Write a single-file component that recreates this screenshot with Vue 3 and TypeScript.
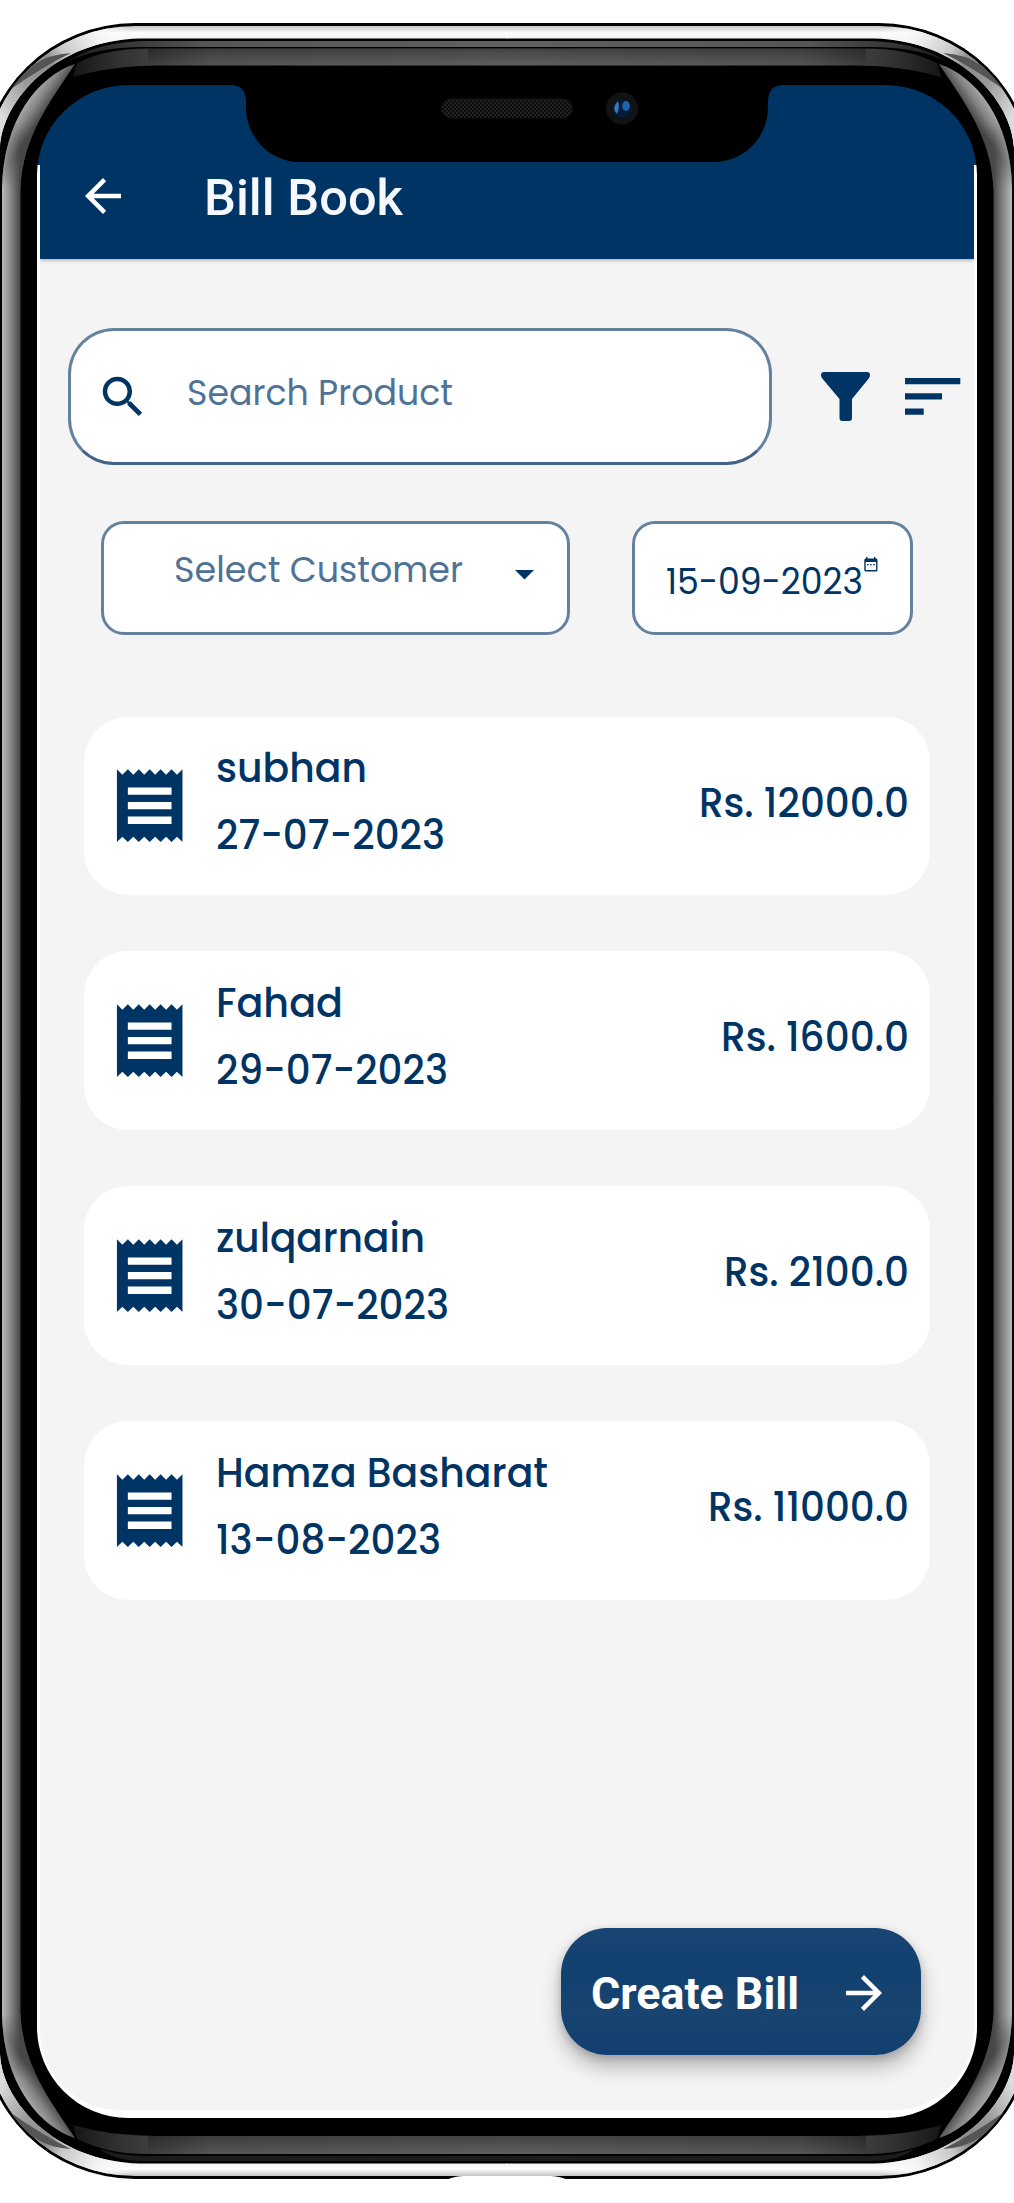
<script setup lang="ts">
import { h, type FunctionalComponent } from 'vue'

interface Bill {
  name: string
  nameWidth: number
  date: string
  dateWidth: number
  amount: string
  amountWidth: number
}

const bills: Bill[] = [
  { name: 'subhan', nameWidth: 151, date: '27-07-2023', dateWidth: 229, amount: 'Rs. 12000.0', amountWidth: 210 },
  { name: 'Fahad', nameWidth: 127, date: '29-07-2023', dateWidth: 232, amount: 'Rs. 1600.0', amountWidth: 188 },
  { name: 'zulqarnain', nameWidth: 209, date: '30-07-2023', dateWidth: 233, amount: 'Rs. 2100.0', amountWidth: 185 },
  { name: 'Hamza Basharat', nameWidth: 332, date: '13-08-2023', dateWidth: 225, amount: 'Rs. 11000.0', amountWidth: 201 },
]

// A single line of text fitted to a fixed advance width.
const FitText: FunctionalComponent<{ text: string; width: number; height: number; base: number }> = (p) =>
  h('svg', { width: p.width, height: p.height, style: 'display:block;flex:none;overflow:visible' }, [
    h('text', { x: 0, y: p.base, textLength: p.width, lengthAdjust: 'spacingAndGlyphs', fill: 'currentColor' }, p.text),
  ])
FitText.props = ['text', 'width', 'height', 'base']

const corners = [
  '',
  'translate(1014 0) scale(-1 1)',
  'translate(0 2202) scale(1 -1)',
  'translate(1014 2202) scale(-1 -1)',
]
</script>

<template>
  <div class="page">
    <main class="screen">
      <header class="bar">
        <svg class="back" viewBox="0 0 24 24" width="54" height="54">
          <path fill="#fff" d="M20 11H7.83l5.59-5.59L12 4l-8 8 8 8 1.41-1.41L7.83 13H20v-2z" />
        </svg>
        <FitText class="title" text="Bill Book" :width="199" :height="60" :base="46" />
      </header>

      <section class="body">
        <div class="search-row">
          <div class="search">
            <svg viewBox="0 0 24 24" width="54" height="54">
              <path fill="#003464" d="M15.5 14h-.79l-.28-.27A6.471 6.471 0 0 0 16 9.5 6.5 6.5 0 1 0 9.5 16c1.61 0 3.09-.59 4.23-1.57l.27.28v.79l5 4.99L20.49 19l-4.99-5zm-6 0C7.01 14 5 11.99 5 9.5S7.01 5 9.5 5 14 7.01 14 9.5 11.99 14 9.5 14z" />
            </svg>
            <FitText class="hint" text="Search Product" :width="266" :height="40" :base="32" />
          </div>
          <svg class="filter" width="49" height="49" viewBox="0 0 49 49">
            <path fill="#003464" d="M3 0H46Q49 0 49 3Q49 5 47.500 6.800L31 27V46Q31 49 28 49H21.500Q18.500 49 18.500 46V27L1.500 6.800Q0 5 0 3Q0 0 3 0Z" />
          </svg>
          <svg class="sort" width="56" height="37" viewBox="0 0 56 37">
            <path fill="#003464" d="M0 0H55.300V6.300H0ZM0 15.200H37V21.500H0ZM0 30.400H18.700V36.700H0Z" />
          </svg>
        </div>

        <div class="select-row">
          <div class="select">
            <FitText class="hint" text="Select Customer" :width="289" :height="40" :base="32" />
            <svg class="caret" width="19" height="10" viewBox="0 0 19 10"><path fill="#003464" d="M0 0H19L9.500 9.500Z" /></svg>
          </div>
          <div class="date">
            <FitText class="date-text" text="15-09-2023" :width="197" :height="40" :base="32" />
            <svg class="cal" width="14" height="15" viewBox="0 0 14 15">
              <path fill="#003464" fill-rule="evenodd" d="M2 0H3.500V1.400H10V0H11.500V1.400H12Q13.500 1.400 13.500 3V13Q13.500 14.500 12 14.500H1.800Q.3 14.500 .3 13V3Q.3 1.400 1.800 1.400H2ZM1.700 5V13.100H12.100V5ZM3 7H4.600V8.200H3ZM6.100 7H7.700V8.200H6.100ZM9.200 7H10.800V8.200H9.200Z" />
            </svg>
          </div>
        </div>

        <div class="list">
          <article v-for="b in bills" :key="b.name" class="card">
            <svg class="receipt" viewBox="0 0 24 24" width="87.400" height="87.400">
              <path fill="#003464" d="M18 17H6v-2h12v2zm0-4H6v-2h12v2zm0-4H6V7h12v2zM3 22l1.500-1.500L6 22l1.500-1.500L9 22l1.500-1.500L12 22l1.500-1.500L15 22l1.500-1.500L18 22l1.500-1.500L21 22V2l-1.500 1.500L18 2l-1.500 1.500L15 2l-1.500 1.500L12 2l-1.500 1.500L9 2 7.500 3.500 6 2 4.500 3.500 3 2v20z" />
            </svg>
            <div class="who">
              <FitText :text="b.name" :width="b.nameWidth" :height="66" :base="40" />
              <FitText :text="b.date" :width="b.dateWidth" :height="66" :base="40.5" />
            </div>
            <FitText class="amount" :text="b.amount" :width="b.amountWidth" :height="60" :base="39.5" />
          </article>
        </div>

        <button class="fab" type="button">
          <FitText class="fab-text" text="Create Bill" :width="208" :height="60" :base="46" />
          <svg viewBox="0 0 24 24" width="54" height="54">
            <path fill="#fff" d="M12 4l-1.410 1.410L16.170 11H4v2h12.170l-5.580 5.590L12 20l8-8z" />
          </svg>
        </button>
      </section>
    </main>

    <svg class="frame" width="1014" height="2203" viewBox="0 0 1014 2203">
      <defs>
        <linearGradient id="side" gradientUnits="userSpaceOnUse" x1="2" y1="0" x2="20" y2="0">
          <stop offset="0" stop-color="#b9b9b9" />
          <stop offset=".5" stop-color="#858585" />
          <stop offset="1" stop-color="#484848" />
        </linearGradient>
        <linearGradient id="sideCorner" gradientUnits="userSpaceOnUse" x1="20" y1="108" x2="39" y2="121">
          <stop offset="0" stop-color="#b0b0b0" />
          <stop offset=".5" stop-color="#858585" />
          <stop offset="1" stop-color="#484848" />
        </linearGradient>
        <linearGradient id="fade" gradientUnits="userSpaceOnUse" x1="0" y1="125" x2="0" y2="188">
          <stop offset="0" stop-color="#fff" stop-opacity="0" />
          <stop offset="1" stop-color="#fff" />
        </linearGradient>
        <mask id="low"><rect x="0" y="100" width="40" height="100" fill="url(#fade)" /></mask>
        <linearGradient id="bandTop" x1="0" x2="1" y1="0" y2="0">
          <stop offset="0" stop-color="#161616" />
          <stop offset=".05" stop-color="#303030" />
          <stop offset=".16" stop-color="#565656" />
          <stop offset=".5" stop-color="#606060" />
          <stop offset=".84" stop-color="#565656" />
          <stop offset=".95" stop-color="#303030" />
          <stop offset="1" stop-color="#161616" />
        </linearGradient>
        <linearGradient id="shade" x1="0" x2="0" y1="0" y2="1">
          <stop offset="0" stop-color="#000" stop-opacity=".3" />
          <stop offset="1" stop-color="#000" stop-opacity="0" />
        </linearGradient>
        <linearGradient id="rim" gradientUnits="userSpaceOnUse" x1="0" y1="26" x2="0" y2="38">
          <stop offset="0" stop-color="#c4c4c4" />
          <stop offset=".6" stop-color="#fff" />
          <stop offset="1" stop-color="#f4f4f4" />
        </linearGradient>
        <linearGradient id="rimCorner" gradientUnits="userSpaceOnUse" x1="0" y1="115" x2="130" y2="30">
          <stop offset="0" stop-color="#dcdcdc" />
          <stop offset=".25" stop-color="#9a9a9a" />
          <stop offset=".45" stop-color="#8a8a8a" />
          <stop offset=".56" stop-color="#c8c8c8" />
          <stop offset=".8" stop-color="#f4f4f4" />
          <stop offset="1" stop-color="#fff" stop-opacity="0" />
        </linearGradient>
        <pattern id="mesh" width="4" height="4" patternUnits="userSpaceOnUse">
          <rect width="4" height="4" fill="#0b0b0b" />
          <path d="M0 0h2v2H0zM2 2h2v2H2z" fill="#222" />
        </pattern>
        <clipPath id="half"><rect x="-20" y="0" width="527.500" height="1102" /></clipPath>
      </defs>

      <!-- body with the display and notch cut out -->
      <path
        fill="#000"
        fill-rule="evenodd"
        d="M135 23H879A153 150 0 0 1 1032 173V2029A153 150 0 0 1 879 2179H135A153 150 0 0 1 -18 2029V173A153 150 0 0 1 135 23Z
           M129 85H232Q246 86 246 102V108C246 136 269 162 300 162H714C745 162 768 136 768 108V102Q768 86 782 85H885A92 90 0 0 1 977 175V2027A91 91 0 0 1 886 2118H128A91 91 0 0 1 37 2027V175A92 90 0 0 1 129 85Z"
      />
      <g v-for="t in corners" :key="t" :transform="t" clip-path="url(#half)">
        <path fill="url(#rim)" d="M508 26H135A150 147 0 0 0 -15 173H0V148C2 100 56 40 140 38.500H508Z" />
        <path fill="url(#rimCorner)" d="M135 26A150 147 0 0 0 -15 173H0V148C2 100 56 40 140 38.500Z" />
        <path fill="#555" d="M71 53Q50 54 33 65Q21 75 11 89Q25 79 40 70Q56 60 71 53Z" />
        <path fill="url(#side)" d="M2 187H20.500V1102H2Z" />
        <path fill="url(#sideCorner)" d="M75 64C38 76 3 120 2 188H20.500C23 136 50 102 75 64Z" />
        <path fill="url(#side)" mask="url(#low)" d="M75 64C38 76 3 120 2 188H20.500C23 136 50 102 75 64Z" />
      </g>

      <!-- upper bezel -->
      <path fill="url(#bandTop)" d="M66 62C86 50 108 42 144 41H870C906 42 928 50 948 62C926 52 903 47 870 47H144C111 47 88 52 66 62Z" />
      <path fill="url(#bandTop)" d="M77 63C100 52 122 48.500 148 48.500H866C892 48.500 914 52 937 63L941 77C916 70 891 65.500 850 65.500H164C123 65.500 98 70 73 77Z" />
      <path fill="url(#shade)" d="M148 48.500H866V65.500H148Z" />

      <!-- lower bezel -->
      <path fill="url(#bandTop)" d="M77 2139C100 2150 122 2154 148 2154H866C892 2154 914 2150 937 2139L941 2125C916 2132 891 2136 850 2136H164C123 2136 98 2132 73 2125Z" />
      <path fill="url(#shade)" d="M148 2136H866V2154H148Z" />
      <path fill="#1c1c1c" d="M100 2149Q120 2156 145 2156H869Q894 2156 914 2149Q900 2161 870 2161H144Q114 2161 100 2149Z" />
      <path fill="#fff" d="M446 2180Q456 2175.500 466 2176H548Q558 2175.500 568 2180Z" />

      <!-- speaker and camera -->
      <rect x="441.500" y="99" width="131" height="19" rx="9.500" fill="url(#mesh)" stroke="#151515" />
      <circle cx="622" cy="108.500" r="16" fill="#111214" />
      <circle cx="622" cy="108.500" r="9" fill="#071a3c" />
      <path d="M618 101Q611 108 617 114Q620 108 618 101Z" fill="#2d7fc4" />
      <ellipse cx="626" cy="106" rx="3.800" ry="5" fill="#1f62ae" />
    </svg>
  </div>
</template>

<style>
body {
  margin: 0;
  background: #fff;
}
</style>

<style scoped>
.page {
  position: relative;
  width: 1014px;
  height: 2203px;
  overflow: hidden;
  background: #fff;
  box-sizing: border-box;
  padding: 85px 37px;
  font-family: Poppins, Inter, 'Noto Sans', sans-serif;
  font-feature-settings: 'cv11';
  color: #003464;
}
.frame {
  position: absolute;
  left: 0;
  top: 0;
  z-index: 2;
  pointer-events: none;
}
.screen {
  width: 940px;
  height: 2033px;
  box-sizing: border-box;
  padding: 0 3px 8px;
  display: flex;
  flex-direction: column;
  border-radius: 60px 60px 90px 90px;
  background: linear-gradient(#003464 80px, #fff 80px);
}
.bar {
  position: relative;
  z-index: 1;
  flex: none;
  height: 174px;
  background: #003464;
  display: flex;
  align-items: flex-start;
  box-sizing: border-box;
  padding: 84px 0 0 36px;
  box-shadow: 0 1px 4px rgba(0, 0, 0, 0.35);
  clip-path: inset(0 0 -8px 0);
}
.title {
  margin: 0 0 0 74px;
  font: 500 50px Roboto, sans-serif;
  color: #f6f8ff;
}
.body {
  flex: 1;
  background: #f4f4f4;
  border-radius: 0 0 80px 80px;
  display: flex;
  flex-direction: column;
  padding-top: 69px;
}
.search-row {
  display: flex;
  align-items: flex-start;
  padding-left: 28px;
}
.search {
  width: 704px;
  height: 137px;
  box-sizing: border-box;
  border: 3px solid #64829f;
  border-bottom-color: #446388;
  border-radius: 46px;
  background: #fff;
  display: flex;
  align-items: flex-start;
  padding: 39px 0 0 25px;
}
.search .hint {
  margin: 3px 0 0 37px;
}
.hint {
  font-size: 35px;
  color: #4f7296;
}
.filter {
  margin: 44px 0 0 49px;
}
.sort {
  margin: 50px 0 0 34.5px;
}
.select-row {
  display: flex;
  margin: 56px 0 0 61px;
}
.select,
.date {
  box-sizing: border-box;
  height: 114px;
  border: 3px solid #64829f;
  border-radius: 23px;
  background: #fff;
  display: flex;
  align-items: flex-start;
}
.select {
  width: 468.5px;
  padding: 26px 0 0 70px;
}
.caret {
  margin: 20px 0 0 51.5px;
}
.date {
  width: 281px;
  margin-left: 62.5px;
  padding: 38px 0 0 31px;
}
.date-text {
  font-size: 35.5px;
}
.cal {
  margin: -5px 0 0 1px;
}
.list {
  margin: 81.5px 44px 0;
  display: flex;
  flex-direction: column;
  gap: 56.7px;
}
.card {
  height: 178.3px;
  box-sizing: border-box;
  border-radius: 44px;
  background: #fff;
  display: flex;
  align-items: flex-start;
  padding: 0 21.5px 0 22px;
  font-size: 40.5px;
  font-weight: 500;
}
.receipt {
  flex: none;
  margin-top: 45.5px;
}
.who {
  margin: 25.5px 0 0 22.5px;
}
.amount {
  margin: 60px 0 0 auto;
}
.fab {
  align-self: flex-end;
  margin: 328px 53.5px 0 0;
  width: 359.5px;
  height: 127px;
  border: 0;
  border-radius: 46px;
  padding: 4px 0 0 30px;
  display: flex;
  align-items: center;
  gap: 38px;
  color: #fff;
  background: linear-gradient(#184572, #12406f 35%, #184470 65%, #113f6f);
  box-shadow: 0 12px 20px rgba(0, 0, 0, 0.26), 0 3px 9px rgba(0, 0, 0, 0.16);
}
.fab-text {
  font: 700 44.5px Roboto, sans-serif;
}
</style>
